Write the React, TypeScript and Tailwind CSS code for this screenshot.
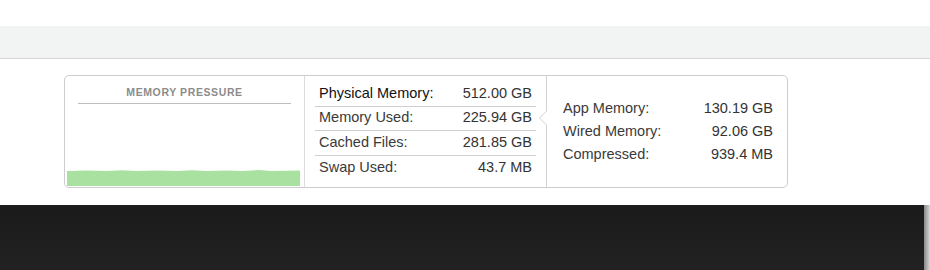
import React from 'react';

const leftRows = [
  { label: 'Physical Memory:', value: '512.00 GB', strong: true },
  { label: 'Memory Used:', value: '225.94 GB' },
  { label: 'Cached Files:', value: '281.85 GB' },
  { label: 'Swap Used:', value: '43.7 MB' },
];

const rightRows = [
  { label: 'App Memory:', value: '130.19 GB' },
  { label: 'Wired Memory:', value: '92.06 GB' },
  { label: 'Compressed:', value: '939.4 MB' },
];

function PressureChart() {
  // green fill with a slightly ragged top edge
  return (
    <svg width="233" height="17" viewBox="0 0 233 17" className="block">
      <path
        d="M0 2 L20 1.6 L40 2 L55 1.2 L70 2 L90 1.6 L110 2 L125 1.2 L140 2 L160 1.6 L175 2 L192 1 L205 2 L233 1.6 L233 17 L0 17 Z"
        fill="#a9e2a0"
      />
    </svg>
  );
}

export default function App() {
  return (
    <div className="w-[930px] h-[270px] flex flex-col bg-white" style={{ fontFamily: '"Liberation Sans", Arial, sans-serif' }}>
      <div className="h-[26px] bg-white" />
      <div className="h-[33px] bg-[#f2f3f3] border-b border-[#d4d5d5]" />

      <div className="h-[146px] bg-white pl-[64px] pt-[16px]">
        {/* Memory panel */}
        <div className="w-[724px] h-[113px] border border-[#cdcdcd] rounded-[5px] flex bg-white">
          {/* Pressure graph */}
          <div className="w-[240px] flex flex-col border-r border-[#dcdcdc]">
            <div className="mx-[13px] mt-[6px] h-[22px] flex items-center justify-center border-b border-[#bdbdbd] text-[10.5px] font-bold tracking-[0.6px] text-[#8c8c8c]">
              MEMORY PRESSURE
            </div>
            <div className="flex-1" />
            <div className="pl-[2px] pb-[1px]">
              <PressureChart />
            </div>
          </div>

          {/* Main stats */}
          <div className="w-[241px] pt-[6px] px-[10px]">
            {leftRows.map((r, i) => (
              <div
                key={r.label}
                className={`h-[24.5px] flex items-center justify-between px-[4px] text-[14.5px] ${
                  i < leftRows.length - 1 ? 'border-b border-[#cfcfcf]' : ''
                }`}
              >
                <span className={r.strong ? 'text-[#111]' : 'text-[#3a3a3a]'}>{r.label}</span>
                <span className="text-[#333]">{r.value}</span>
              </div>
            ))}
          </div>

          {/* Divider with notch */}
          <div className="relative w-[1px]">
            <svg width="10" height="111" viewBox="0 0 10 111" className="absolute left-[-8px] top-0">
              <path d="M8.5 0 L8.5 35 L1.5 42 L8.5 49 L8.5 111" fill="none" stroke="#d2d2d2" strokeWidth="1" />
            </svg>
          </div>

          {/* Breakdown */}
          <div className="flex-1 pt-[21px] pl-[16px] pr-[14px]">
            {rightRows.map((r) => (
              <div key={r.label} className="h-[23px] flex items-center justify-between text-[14.5px] text-[#3a3a3a]">
                <span>{r.label}</span>
                <span className="text-[#333]">{r.value}</span>
              </div>
            ))}
          </div>
        </div>
      </div>

      <div className="flex-1 flex bg-[#1e1e1e]">
        <div className="flex-1 bg-gradient-to-b from-[#1b1b1b] to-[#222]" />
        <div className="w-[6px] bg-gradient-to-r from-[#8a8a8a] to-[#d8d8d8]" />
      </div>
    </div>
  );
}
